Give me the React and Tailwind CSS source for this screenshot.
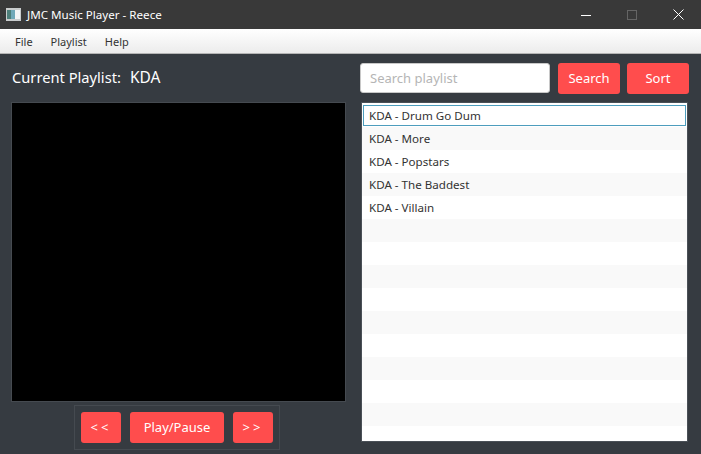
import { useState } from "react";

const tracks = ["KDA - Drum Go Dum", "KDA - More", "KDA - Popstars", "KDA - The Baddest", "KDA - Villain"];
const rows = Array.from({ length: 15 }, (_, i) => tracks[i] || "");
const menus = ["File", "Playlist", "Help"];
const font = "font-['Noto_Sans','Open_Sans',sans-serif]";

function RedButton({ className, children }) {
  return (
    <button className={`h-[31px] rounded-[3px] bg-[#ff4d4d] text-[13px] leading-none text-white ${className}`}>
      {children}
    </button>
  );
}

export default function App() {
  const [query, setQuery] = useState("");

  return (
    <div className={`flex h-[454px] w-[701px] flex-col overflow-hidden bg-[#363b41] ${font}`}>
      {/* TITLE BAR */}
      <div className="flex h-[29px] items-center bg-[#393939] pl-[6px] text-white">
        <svg width="15" height="13" viewBox="0 0 15 13" className="mr-[6px]">
          <rect width="15" height="13" fill="#c9cccd" />
          <rect x="1" y="2" width="4" height="9" fill="#4d7f7a" />
          <rect x="5" y="2" width="4" height="9" fill="#6fa8b8" />
          <rect x="9" y="2" width="5" height="9" fill="#f2f4f5" />
        </svg>
        <span className="text-[11.6px] leading-none">JMC Music Player - Reece</span>
        <div className="ml-auto flex h-full">
          <div className="flex w-[46px] items-center justify-center">
            <svg width="10" height="10" viewBox="0 0 10 10">
              <path d="M0 5.5h10" stroke="#fff" strokeWidth="1" />
            </svg>
          </div>
          <div className="flex w-[46px] items-center justify-center">
            <svg width="10" height="10" viewBox="0 0 10 10">
              <rect x="0.5" y="0.5" width="9" height="9" fill="none" stroke="#656565" strokeWidth="1" />
            </svg>
          </div>
          <div className="flex w-[46px] items-center justify-center">
            <svg width="11" height="11" viewBox="0 0 11 11">
              <path d="M0.5 0.5l10 10M10.5 0.5l-10 10" stroke="#fff" strokeWidth="1" />
            </svg>
          </div>
        </div>
      </div>

      {/* MENU BAR */}
      <div className="flex h-[25px] items-center border-b border-[#b5b5b5] bg-gradient-to-b from-white to-[#ececec] pl-[15px]">
        {menus.map((m) => (
          <span key={m} className="mr-[18px] text-[11px] leading-none text-[#333]">
            {m}
          </span>
        ))}
      </div>

      {/* MAIN */}
      <div className="flex flex-1 pl-[11px] pr-[12px]">
        <div className="flex w-[335px] flex-col">
          <div className="flex h-[48px] w-full items-center pl-px text-white">
            <div className="flex items-baseline text-[14.7px] leading-none">
              <span>Current Playlist:</span>
              <span className="ml-[9px] text-[15.5px]">KDA</span>
            </div>
          </div>
          <div className="h-[300px] w-full border border-[#454a50] bg-black" />
          <div className="mt-[3px] ml-[63px] flex h-[45px] w-[206px] items-center gap-[9px] border border-[#454a50] pl-[6px]">
            <RedButton className="w-[40px] tracking-[3px]">{"<<"}</RedButton>
            <RedButton className="w-[94px]">Play/Pause</RedButton>
            <RedButton className="w-[40px] tracking-[3px]">{">>"}</RedButton>
          </div>
        </div>

        <div className="ml-[14px] flex flex-1 flex-col">
          <div className="flex h-[48px] items-center">
            <input
              value={query}
              onChange={(e) => setQuery(e.target.value)}
              placeholder="Search playlist"
              className="h-[30px] w-[190px] rounded-[3px] border border-[#c8c8c8] bg-white px-[9px] text-[13px] text-[#333] outline-none placeholder:text-[#b5b5b5]"
            />
            <RedButton className="ml-[8px] w-[62px]">Search</RedButton>
            <RedButton className="ml-[7px] w-[62px]">Sort</RedButton>
          </div>
          <div className="ml-px h-[340px] w-[327px] overflow-hidden border border-[#4a5057] bg-white pt-px">
            {rows.map((t, i) =>
              i === 0 ? (
                <div key={i} className="h-[23px] bg-white px-px pt-px">
                  <div className="flex h-[21px] items-center border border-[#4d9dbd] px-[5px] text-[11.6px] leading-none text-[#333]">
                    {t}
                  </div>
                </div>
              ) : (
                <div
                  key={i}
                  className={`flex h-[23px] items-center px-[7px] text-[11.6px] leading-none text-[#333] ${
                    i % 2 === 1 ? "bg-[#f9f9f9]" : "bg-white"
                  }`}
                >
                  {t}
                </div>
              )
            )}
          </div>
        </div>
      </div>
    </div>
  );
}
